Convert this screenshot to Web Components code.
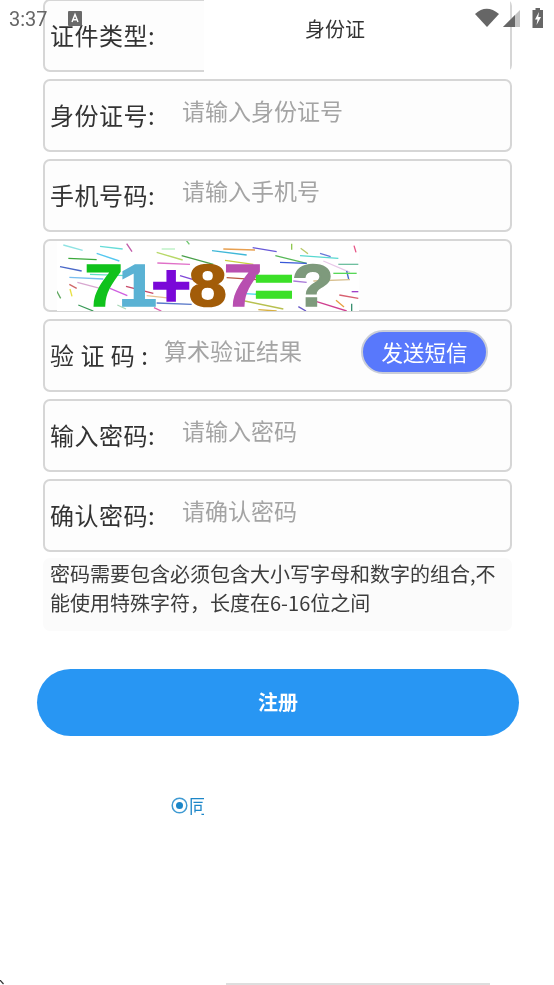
<!DOCTYPE html>
<html lang="zh">
<head>
<meta charset="utf-8">
<title>注册</title>
<style>
html, body { margin: 0; background: #fff; }
body { font-family: "Noto Sans CJK SC", "Liberation Sans", sans-serif; }
</style>
</head>
<body>
<register-page>
	<form-row slot="rows" label="证件类型:" first><picker-box>身份证</picker-box></form-row>
	<form-row slot="rows" label="身份证号:"><hint-text>请输入身份证号</hint-text></form-row>
	<form-row slot="rows" label="手机号码:"><hint-text>请输入手机号</hint-text></form-row>
	<form-row slot="rows" flush><captcha-image></captcha-image></form-row>
	<form-row slot="rows" label="验 证 码 :" narrow><hint-text>算术验证结果</hint-text><sms-button>发送短信</sms-button></form-row>
	<form-row slot="rows" label="输入密码:"><hint-text>请输入密码</hint-text></form-row>
	<form-row slot="rows" label="确认密码:"><hint-text>请确认密码</hint-text></form-row>
</register-page>

<script>
//#region STATUS BAR
const statusBar_template = document.createElement("template");
statusBar_template.innerHTML = /* html */ `
<style>
:host {
	position: absolute;
	top: 0;
	left: 0;
	right: 0;
	z-index: 2;
	height: 36px;
	color: #666;
	font: 20px "Roboto", "Liberation Sans", sans-serif;
}
.time { position: absolute; left: 9px; top: 8px; line-height: 23px; }
svg { position: absolute; left: 0; top: 0; }
</style>
<span class="time">3:37</span>
<svg width="554" height="36" viewBox="0 0 554 36">
	<rect x="68" y="11" width="14" height="15" rx="1" fill="#6a6a6a"/>
	<path d="M72 22 L75 14.5 L78 22 M73.2 19.8 H76.8" stroke="#fff" stroke-width="1.4" fill="none"/>
	<path d="M475 14 Q486.500 3.500 499 14 L487 27 Z" fill="#666"/>
	<path d="M503 27 L520 10 V27 Z" fill="#c4c4c4"/>
	<path d="M503 27 L515 15 V27 Z" fill="#666"/>
	<path d="M535.500 8 H540 V10 H543 V28 H532.500 V10 H535.500 Z" fill="#666"/>
	<path d="M539 12 L535 19.500 H537.500 L536.500 25 L541 17 H538.300 Z" fill="#fff"/>
</svg>
`;
window.customElements.define(
	"status-bar",
	class extends HTMLElement {
		constructor() {
			super();
			this.attachShadow({mode: "open"}).appendChild(
				statusBar_template.content.cloneNode(true)
			);
		}
	}
);
//#endregion STATUS BAR

//#region FORM ROW
const formRow_template = document.createElement("template");
formRow_template.innerHTML = /* html */ `
<style>
:host {
	display: flex;
	align-items: center;
	position: relative;
	box-sizing: border-box;
	height: 73px;
	padding-left: 5px;
	background: #fdfdfd;
	border: 2px solid #d6d6d6;
	border-radius: 7px;
	color: #333;
}
:host([flush]) { padding-left: 12px; align-items: flex-start; }
.label { flex: none; width: 132px; margin-top: -2px; font-size: 24px; letter-spacing: 0.5px; line-height: 32px; white-space: pre; }
:host([narrow]) .label { width: 114px; }
:host([flush]) .label { display: none; }
</style>
<span class="label"></span>
<slot></slot>
`;
window.customElements.define(
	"form-row",
	class extends HTMLElement {
		constructor() {
			super();
			this.attachShadow({mode: "open"}).appendChild(
				formRow_template.content.cloneNode(true)
			);
		}

		connectedCallback() {
			this.shadowRoot.querySelector(".label").textContent =
				this.getAttribute("label") || "";
		}
	}
);
//#endregion FORM ROW

//#region HINT TEXT
const hintText_template = document.createElement("template");
hintText_template.innerHTML = /* html */ `
<style>
:host {
	display: block;
	margin-top: -11px;
	color: #a4a4a4;
	font-size: 23px;
	line-height: 32px;
	white-space: nowrap;
}
</style>
<slot></slot>
`;
window.customElements.define(
	"hint-text",
	class extends HTMLElement {
		constructor() {
			super();
			this.attachShadow({mode: "open"}).appendChild(
				hintText_template.content.cloneNode(true)
			);
		}
	}
);
//#endregion HINT TEXT

//#region PICKER
const pickerBox_template = document.createElement("template");
pickerBox_template.innerHTML = /* html */ `
<style>
:host {
	position: absolute;
	left: 159px;
	right: 0;
	top: -1px;
	bottom: -2px;
	box-sizing: border-box;
	padding: 15px 44px 0 0;
	background: #fff;
	color: #333;
	font-size: 20px;
	line-height: 28px;
	text-align: center;
}
</style>
<slot></slot>
`;
window.customElements.define(
	"picker-box",
	class extends HTMLElement {
		constructor() {
			super();
			this.attachShadow({mode: "open"}).appendChild(
				pickerBox_template.content.cloneNode(true)
			);
		}
	}
);
//#endregion PICKER

//#region SMS BUTTON
const smsButton_template = document.createElement("template");
smsButton_template.innerHTML = /* html */ `
<style>
:host {
	display: flex;
	align-items: center;
	justify-content: center;
	box-sizing: border-box;
	width: 127px;
	height: 44px;
	margin: -8px 0 0 59px;
	background: #5878fc;
	border: 2px solid #c9cdd8;
	border-radius: 22px;
	color: #fff;
	font-size: 21.500px;
}
</style>
<slot></slot>
`;
window.customElements.define(
	"sms-button",
	class extends HTMLElement {
		constructor() {
			super();
			this.attachShadow({mode: "open"}).appendChild(
				smsButton_template.content.cloneNode(true)
			);
		}
	}
);
//#endregion SMS BUTTON

//#region CAPTCHA
const noise = [
	[70,30,128,46,"#8fe3e3"],[180,34,248,42,"#66dcd8"],[260,26,276,50,"#c05aa8"],[170,55,238,78,"#55c8f0"],
	[85,70,170,74,"#3aa83a"],[60,95,125,108,"#4a68c8"],[88,127,190,132,"#78bff0"],[112,142,180,160,"#d8a8d0"],
	[88,148,110,160,"#d06868"],[50,168,62,190,"#60a860"],[90,162,96,184,"#e8e040"],[115,210,160,228,"#3a9a58"],
	[232,210,258,222,"#a8d8b8"],[365,42,405,42,"#b8f0c0"],[350,52,428,75,"#b8d868"],[425,62,520,88,"#4aa04a"],
	[352,84,450,88,"#e070c8"],[438,15,448,28,"#70c870"],[516,47,620,60,"#40b8d8"],[550,42,645,45,"#e8a050"],
	[638,38,710,50,"#6858d8"],[555,76,640,88,"#c8d040"],[706,62,800,85,"#58b858"],[720,82,800,85,"#3858d8"],
	[755,26,755,44,"#90c850"],[782,40,804,56,"#b8c868"],[780,62,895,70,"#58d8d0"],[840,55,872,65,"#6878d8"],
	[850,78,930,112,"#e8c8e8"],[895,88,955,88,"#70c0a0"],[942,32,948,52,"#e85888"],[920,108,926,132,"#4868c8"],
	[880,115,950,115,"#58d858"],[820,138,930,134,"#d8c090"],[898,180,955,190,"#d86070"],[935,170,955,170,"#a040c8"],
	[888,196,912,216,"#e8a040"],[935,206,935,228,"#3a9070"],[830,200,920,228,"#d04090"],[775,215,798,228,"#6858c8"],
	[350,204,455,208,"#5878c8"],[342,218,364,228,"#e060b0"],[600,195,730,222,"#b8c050"],[655,224,710,228,"#d8b040"],
	[258,154,340,175,"#c84868"],[320,182,395,190,"#e8c090"],[420,122,480,140,"#8048d8"],[560,128,650,134,"#b85840"],
	[600,175,690,180,"#40d8e8"],[150,118,260,122,"#60e0c8"],[210,160,262,182,"#d060e0"],[760,138,800,142,"#a878d8"]
];
const glyphs = [
	[134,"7","#10c21c"],[236,"1","#5ab2d4"],[334,"+","#7a08d8"],[446,"8","#a25c08"],
	[552,"7","#b84fb0"],[642,"=","#3ce028"],[756,"?","#7e9a7c"]
];
const captchaImage_template = document.createElement("template");
captchaImage_template.innerHTML = /* html */ `
<style>
:host { display: block; width: 302px; height: 70px; background: #fff; }
svg { display: block; }
text {
	font: bold 178px "Liberation Sans", sans-serif;
	stroke-width: 5;
}
</style>
<svg width="302" height="70" viewBox="51 18 906 210">
	${noise.map(([a, b, c, d, col]) => `<line x1="${a}" y1="${b}" x2="${c}" y2="${d}" stroke="${col}" stroke-width="4"/>`).join("")}
	${glyphs.map(([x, t, col]) => `<text transform="translate(${x} 212) scale(1.15 1)" fill="${col}" stroke="${col}">${t}</text>`).join("")}
</svg>
`;
window.customElements.define(
	"captcha-image",
	class extends HTMLElement {
		constructor() {
			super();
			this.attachShadow({mode: "open"}).appendChild(
				captchaImage_template.content.cloneNode(true)
			);
		}
	}
);
//#endregion CAPTCHA

//#region PAGE
const registerPage_template = document.createElement("template");
registerPage_template.innerHTML = /* html */ `
<style>
:host {
	display: block;
	position: relative;
	height: 985px;
	overflow: hidden;
	background: #fff;
	filter: blur(0.4px);
}
.rows {
	display: flex;
	flex-direction: column;
	gap: 7px;
	margin: -1px 42px 0 43px;
}
.note {
	box-sizing: border-box;
	height: 73px;
	margin: 6px 42px 0 43px;
	padding: 1px 0 0 7px;
	background: #fbfbfb;
	border-radius: 7px;
	color: #3c3c3c;
	font-size: 20px;
	line-height: 29px;
}
.submit {
	display: flex;
	align-items: center;
	justify-content: center;
	box-sizing: border-box;
	height: 67px;
	margin: 38px 35px 0 37px;
	padding-bottom: 3px;
	background: #2896f3;
	border-radius: 34px;
	color: #fff;
	font-size: 20px;
	font-weight: 700;
}
.agree {
	display: flex;
	align-items: center;
	width: 33px;
	height: 22px;
	margin: 58px 0 0 171px;
	overflow: hidden;
	color: #1c86c8;
	font-size: 18px;
}
.agree svg { flex: none; }
.agree span { flex: none; margin-left: 1px; }
.home {
	position: absolute;
	left: 226px;
	bottom: 0;
	width: 264px;
	height: 2px;
	background: #dedede;
}
.corner {
	position: absolute;
	left: 0;
	bottom: 0;
}
</style>
<status-bar></status-bar>
<div class="rows"><slot name="rows"></slot></div>
<div class="note">密码需要包含必须包含大小写字母和数字的组合,不能使用特殊字符，长度在6-16位之间</div>
<div class="submit">注册</div>
<div class="agree">
	<svg width="17" height="17" viewBox="0 0 17 17">
		<circle cx="8.500" cy="8.500" r="7.300" fill="none" stroke="#3f9ad2" stroke-width="1.500"/>
		<circle cx="8.500" cy="8.500" r="3.500" fill="#1c86c8"/>
	</svg>
	<span>同</span>
</div>
<div class="home"></div>
<svg class="corner" width="4" height="5" viewBox="0 0 4 5"><path d="M0 0 L3.500 4" stroke="#333" stroke-width="1.200"/></svg>
`;
window.customElements.define(
	"register-page",
	class extends HTMLElement {
		constructor() {
			super();
			this.attachShadow({mode: "open"}).appendChild(
				registerPage_template.content.cloneNode(true)
			);
		}
	}
);
//#endregion PAGE
</script>
</body>
</html>
